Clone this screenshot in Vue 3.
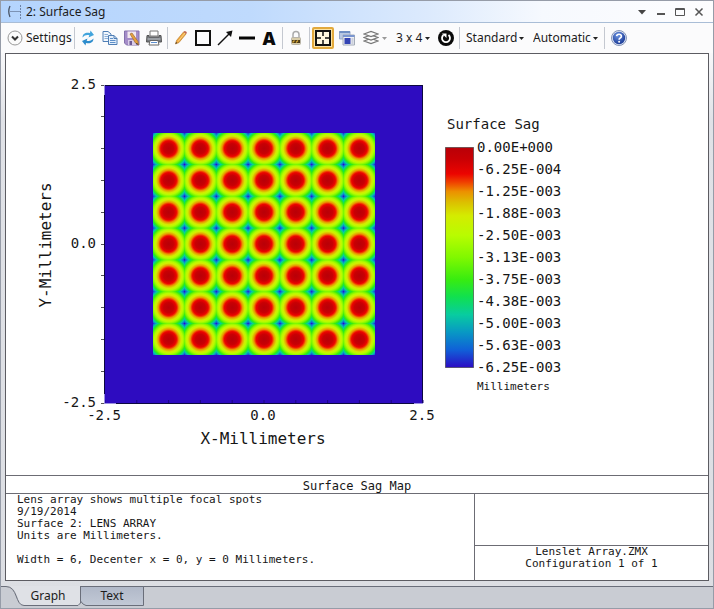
<script setup>
import { ref } from 'vue'

const activeTab = ref('Graph')

const palette = [
  [0, '#b80008'],
  [0.05, '#c80004'],
  [0.12, '#ec0400'],
  [0.16, '#f04400'],
  [0.2, '#ec9000'],
  [0.25, '#dcc000'],
  [0.31, '#d4ec00'],
  [0.4, '#b8fc00'],
  [0.5, '#80f800'],
  [0.6, '#38ec10'],
  [0.68, '#10e050'],
  [0.76, '#08cca0'],
  [0.84, '#0898c4'],
  [0.92, '#1060d8'],
  [1, '#2c0cc4']
]

// Sag grows with the square of the radius, so the radial stops sit at the square root.
const lensStops = palette.map(([t, color]) => ({ offset: Math.sqrt(t), color }))

const side = 318
const pitch = side / 10
const ticks = Array.from({ length: 11 }, (_, i) => i * pitch)
const lenses = Array.from({ length: 49 }, (_, i) => ({
  x: (1.5 + (i % 7)) * pitch,
  y: (1.5 + Math.floor(i / 7)) * pitch
}))

const levels = [
  '0.00E+000', '-6.25E-004', '-1.25E-003', '-1.88E-003', '-2.50E-003', '-3.13E-003',
  '-3.75E-003', '-4.38E-003', '-5.00E-003', '-5.63E-003', '-6.25E-003'
]
</script>

<template>
  <main class="window">
    <header class="titlebar">
      <svg class="app-icon" width="14" height="14" viewBox="0 0 14 14" fill="none">
        <path d="M3 1Q0.500 6.500 3 12" stroke="#4a5566" stroke-width="1.300" />
        <path d="M3 6.500H13" stroke="#7d93b5" />
        <path d="M13.500 0V14" stroke="#6e84a8" stroke-dasharray="2 1" />
      </svg>
      <h1>2: Surface Sag</h1>
      <div class="window-buttons">
        <button aria-label="Window menu"><svg width="10" height="10" viewBox="0 0 10 10"><path d="M1 3H9L5 7.500Z" fill="#444" /></svg></button>
        <button aria-label="Minimize"><svg width="10" height="10" viewBox="0 0 10 10"><path d="M1 6H9V8H1Z" fill="#555" /></svg></button>
        <button aria-label="Maximize"><svg width="10" height="10" viewBox="0 0 10 10" fill="none" stroke="#555"><path d="M1 1.500H9.500V8.500H0.500V1.500Z" /><path d="M0.500 2.500H9.500" /></svg></button>
        <button aria-label="Close"><svg width="10" height="10" viewBox="0 0 10 10" fill="none" stroke="#555" stroke-width="1.500"><path d="M1.500 1.500L8.500 8.500M8.500 1.500L1.500 8.500" /></svg></button>
      </div>
    </header>

    <div class="toolbar" role="toolbar" aria-label="Graph tools">
      <button class="settings">
        <svg width="16" height="16" viewBox="0 0 16 16" fill="none">
          <circle cx="8" cy="8" r="7" fill="#fbfbfb" stroke="#999" />
          <path d="M5 6.500L8 9.500L11 6.500" stroke="#333" stroke-width="2" />
        </svg>
        Settings
      </button>
      <span class="sep"></span>
      <button class="tool" aria-label="Update">
        <svg width="16" height="16" viewBox="0 0 16 16">
          <path d="M2.500 7.500C2.500 3.500 6 2 10 3L10.500 0.500L14 5L8.500 7.500L9.300 5.300C6.500 4.600 4.500 5.300 2.500 7.500Z" fill="#42a4dc" />
          <path d="M13.500 8.500C13.500 12.500 10 14 6 13L5.500 15.500L2 11L7.500 8.500L6.700 10.700C9.500 11.400 11.500 10.700 13.500 8.500Z" fill="#2d8ccc" />
        </svg>
      </button>
      <button class="tool" aria-label="Copy">
        <svg width="16" height="16" viewBox="0 0 16 16" stroke="#4f7eb5">
          <path d="M1 1.500H6L9 4V11.500H1Z" fill="#f2f7fd" />
          <path d="M2.500 4.500H6M2.500 6.500H6M2.500 8.500H6" stroke="#8fb0d8" />
          <path d="M6.500 5.500H12L15 8.500V14.500H6.500Z" fill="#e4effb" />
          <path d="M12 5.500V8.500H15" fill="none" />
          <path d="M8 8.500H11M8 10.500H13.500M8 12.500H13.500" stroke="#5e8fc8" />
        </svg>
      </button>
      <button class="tool" aria-label="Save">
        <svg width="16" height="16" viewBox="0 0 16 16">
          <path d="M0.500 1H15V15H2.500L0.500 13Z" fill="#a48cc8" stroke="#8470ac" />
          <path d="M3.500 1.500H12V8H3.500Z" fill="#f2e7ee" />
          <path d="M4 10H12V15H4Z" fill="#d8cce8" />
          <path d="M5.500 11H8V15H5.500Z" fill="#6d5a94" />
          <path d="M6 4L8 3L14 11.500L14.500 15L11.500 13Z" fill="#e5a03c" stroke="#a16b33" stroke-width="0.700" />
          <path d="M13 13L14.500 15L11.800 13.500Z" fill="#333" />
        </svg>
      </button>
      <button class="tool" aria-label="Print">
        <svg width="16" height="16" viewBox="0 0 16 16">
          <path d="M4 1H12V6H4Z" fill="#fff" stroke="#777" />
          <path d="M1 5.500H3V7H13V5.500H15L15.500 12H0.500Z" fill="#777b80" stroke="#555" />
          <path d="M1.500 9H14.500" stroke="#c0c4c8" />
          <path d="M4 10.500H12L13 15H3Z" fill="#fff" stroke="#666" />
          <path d="M5 12.500H11" stroke="#5c8fd0" />
        </svg>
      </button>
      <span class="sep"></span>
      <button class="tool" aria-label="Pencil">
        <svg width="16" height="16" viewBox="0 0 16 16">
          <path d="M2.500 14L3.500 10.500L10.500 2L13 4L6 12.500Z" fill="#efa840" stroke="#b47422" stroke-width="0.600" />
          <path d="M10.500 2L11.500 1Q13.500 1 14 3L13 4Z" fill="#c06850" />
          <path d="M2.500 14L3 12L4.200 13Z" fill="#333" />
          <path d="M5 11.500L12 3" stroke="#f8d488" />
        </svg>
      </button>
      <button class="tool" aria-label="Rectangle">
        <svg width="16" height="16" viewBox="0 0 16 16"><path d="M1 1H15V15H1Z" fill="none" stroke="#111" stroke-width="2" /></svg>
      </button>
      <button class="tool" aria-label="Arrow">
        <svg width="16" height="16" viewBox="0 0 16 16"><path d="M1 15L12 4" stroke="#111" stroke-width="1.500" /><path d="M15.500 0.500L14 7L9 2Z" fill="#111" /></svg>
      </button>
      <button class="tool" aria-label="Line">
        <svg width="16" height="16" viewBox="0 0 16 16"><path d="M0 6.500H16V9.500H0Z" fill="#050505" /></svg>
      </button>
      <button class="tool letter">A</button>
      <span class="sep"></span>
      <button class="tool" aria-label="Lock">
        <svg width="16" height="16" viewBox="0 0 16 16">
          <path d="M5 8V4.500Q5 1.500 8 1.500T11 4.500V8" fill="none" stroke="#aaa" stroke-width="1.500" />
          <rect x="3.500" y="7.500" width="9" height="7" rx="1" fill="#d8cca8" stroke="#b8b4a8" />
          <path d="M4 11.500H12" stroke="#4a3a18" stroke-width="3" />
          <path d="M4.500 12.500L6.500 10.500M8 12.500L10 10.500" stroke="#d8a838" stroke-width="1.200" />
        </svg>
      </button>
      <span class="sep"></span>
      <button class="tool pressed" aria-label="Fit to window" aria-pressed="true">
        <svg width="16" height="16" viewBox="0 0 16 16">
          <path d="M1 1H15V15H1Z" fill="#fff7df" stroke="#111" stroke-width="2" />
          <path d="M8 2V6M8 10V14M2 8H6M10 8H14" stroke="#111" stroke-width="1.500" />
        </svg>
      </button>
      <button class="tool clone" aria-label="Clone window">
        <svg width="16" height="16" viewBox="0 0 16 16">
          <path d="M0.500 1.500H11V9H0.500Z" fill="#b8c8e4" stroke="#9aaac8" />
          <path d="M0.500 2H11" stroke="#6f8fc4" stroke-width="2" />
          <path d="M4 5H15.500V15H4Z" fill="#eef0f6" stroke="#a4acb8" />
          <path d="M4 6H15.500" stroke="#7a96d0" stroke-width="2" />
          <path d="M5.500 8H11.500V14H5.500Z" fill="#3444b4" />
          <path d="M12.500 9H14.500M12.500 11H14.500M12.500 13H14.500" stroke="#a8b0c0" />
        </svg>
      </button>
      <button class="layers" aria-label="Layers">
        <svg width="16" height="16" viewBox="0 0 16 16" fill="#fdfdfd" stroke="#777" stroke-width="1.200">
          <path d="M1 11L8 8.500L15 11L8 13.500Z" />
          <path d="M1 7.500L8 5L15 7.500L8 10Z" />
          <path d="M1 4L8 1.500L15 4L8 6.500Z" />
        </svg>
        <svg class="caret muted" width="5" height="3" viewBox="0 0 5 3"><path d="M0 0H5L2.500 3Z" /></svg>
      </button>
      <label class="picker size">
        <select aria-label="Aspect ratio"><option>3 x 4</option></select>
        <svg class="caret" width="5" height="3" viewBox="0 0 5 3"><path d="M0 0H5L2.500 3Z" /></svg>
      </label>
      <button class="tool" aria-label="Reset view">
        <svg width="16" height="16" viewBox="0 0 16 16">
          <circle cx="8" cy="8" r="8" fill="#0a0a0a" />
          <path d="M10.500 5A4 4 0 1 1 5.500 5" fill="none" stroke="#fff" stroke-width="1.800" />
          <path d="M4 3.500H8.500V8Z" fill="#fff" />
        </svg>
      </button>
      <span class="sep"></span>
      <label class="picker standard">
        <select aria-label="Quality"><option>Standard</option></select>
        <svg class="caret" width="5" height="3" viewBox="0 0 5 3"><path d="M0 0H5L2.500 3Z" /></svg>
      </label>
      <label class="picker automatic">
        <select aria-label="Update mode"><option>Automatic</option></select>
        <svg class="caret" width="5" height="3" viewBox="0 0 5 3"><path d="M0 0H5L2.500 3Z" /></svg>
      </label>
      <span class="sep"></span>
      <button class="tool help" aria-label="Help">
        <svg width="16" height="16" viewBox="0 0 16 16">
          <defs>
            <radialGradient id="help-fill" cx="0.4" cy="0.3" r="0.7">
              <stop offset="0" stop-color="#6c93e0" /><stop offset="1" stop-color="#1c3c98" />
            </radialGradient>
          </defs>
          <circle cx="8" cy="8" r="7.500" fill="#dfe6f4" stroke="#8494b8" />
          <circle cx="8" cy="8" r="6.200" fill="url(#help-fill)" />
          <path d="M5.600 6.200Q5.800 4.200 8 4.200T10.400 6.200Q10.400 7.300 9.200 8Q8.100 8.600 8.100 9.700" fill="none" stroke="#fff" stroke-width="1.600" />
          <circle cx="8.100" cy="11.700" r="1" fill="#fff" />
        </svg>
      </button>
    </div>

    <section class="sheet">
      <div class="chart">
        <svg class="plot" width="430" height="400" viewBox="0 0 430 400" role="img" aria-label="Surface sag over X and Y in millimeters">
          <defs>
            <radialGradient id="lens" cx="0.5" cy="0.5" r="0.7071">
              <stop v-for="s in lensStops" :key="s.offset" :offset="s.offset" :stop-color="s.color" />
            </radialGradient>
          </defs>
          <g transform="translate(99 31)">
            <rect :width="side" :height="side" fill="#2e0cc0" />
            <g shape-rendering="crispEdges">
              <rect v-for="(l, i) in lenses" :key="i" :x="l.x" :y="l.y" :width="pitch" :height="pitch" fill="url(#lens)" />
            </g>
            <path d="M-1 0.500H318M-0.500 0V318M-1 318.500H318M317.500 0V318" fill="none" stroke="#0c0840" />
            <path v-for="t in ticks" :key="t" :d="`M-4 ${Math.floor(t) + 0.5}H-1`" stroke="#555" />
            <path v-for="t in ticks" :key="'x' + t" :d="`M${t} 315V318`" stroke="#1c0880" />
            <path d="M-1 318.500H11M309 318.500H318M-0.500 0V10M-0.500 309V318" stroke="#9c90e0" />
            <g class="tick-text">
              <text x="-9" y="4" text-anchor="end">2.5</text>
              <text x="-9" y="163" text-anchor="end">0.0</text>
              <text x="-9" y="322" text-anchor="end">-2.5</text>
              <text x="-1" y="335" text-anchor="middle">-2.5</text>
              <text x="158" y="335" text-anchor="middle">0.0</text>
              <text x="317" y="335" text-anchor="middle">2.5</text>
            </g>
            <text class="axis-text" x="158" y="359" text-anchor="middle">X-Millimeters</text>
            <text class="axis-text" transform="translate(-54 160) rotate(-90)" text-anchor="middle">Y-Millimeters</text>
          </g>
        </svg>

        <div class="legend">
          <h2>Surface Sag</h2>
          <div class="scale">
            <svg class="bar" viewBox="0 0 29 221" preserveAspectRatio="none">
              <defs>
                <linearGradient id="ramp" x2="0" y2="1">
                  <stop v-for="[t, color] in palette" :key="t" :offset="t" :stop-color="color" />
                </linearGradient>
              </defs>
              <rect x="0.500" y="0.500" width="28" height="220" fill="url(#ramp)" stroke="#333" stroke-opacity="0.6" />
            </svg>
            <ol class="levels">
              <li v-for="level in levels" :key="level">{{ level }}</li>
            </ol>
          </div>
          <p class="unit">Millimeters</p>
        </div>
      </div>

      <h2 class="caption">Surface Sag Map</h2>
      <div class="info">
        <div class="notes">
          <p>Lens array shows multiple focal spots</p>
          <p>9/19/2014</p>
          <p>Surface 2: LENS ARRAY</p>
          <p>Units are Millimeters.</p>
          <p class="spaced">Width = 6, Decenter x = 0, y = 0 Millimeters.</p>
        </div>
        <div class="file">
          <div class="blank"></div>
          <div class="config">
            <p>Lenslet Array.ZMX</p>
            <p>Configuration 1 of 1</p>
          </div>
        </div>
      </div>
    </section>

    <nav class="tabs" role="tablist">
      <button class="tab graph" role="tab" :aria-selected="activeTab === 'Graph'" @click="activeTab = 'Graph'">
        <svg width="80" height="20" viewBox="0 0 80 20">
          <path d="M0 0H80V16L77 19.500H23C15 19 18 0.500 5 0.500H0Z" fill="#dfe1e6" />
          <path d="M0 0H5C18 0.500 15 19 23 19.500V20H0Z" fill="#c9ccd3" />
          <path d="M0 0.500H5C17 0.500 14 19.500 23 19.500H77L79.500 17V0" fill="none" stroke="#6a6e7a" />
        </svg>
        <span>Graph</span>
      </button>
      <button class="tab text" role="tab" :aria-selected="activeTab === 'Text'" @click="activeTab = 'Text'">
        <svg width="64" height="20" viewBox="0 0 64 20">
          <defs>
            <linearGradient id="tab-fill" x2="0" y2="1">
              <stop offset="0" stop-color="#b0b8c8" /><stop offset="1" stop-color="#c2c9d6" />
            </linearGradient>
          </defs>
          <path d="M0.500 0.500H63.500V19.500H6Q3 19 0.500 15Z" fill="url(#tab-fill)" stroke="#6a6e7a" />
        </svg>
        <span>Text</span>
      </button>
    </nav>
  </main>
</template>

<style>
body {
  margin: 0;
  background: #fff;
}
</style>

<style scoped>
* {
  box-sizing: border-box;
}

h1, h2, p, ol {
  margin: 0;
  padding: 0;
  font-weight: 400;
}

button, select {
  margin: 0;
  padding: 0;
  border: 0;
  background: none;
  color: inherit;
  font: inherit;
}

svg {
  display: block;
  flex: none;
}

.window {
  display: flex;
  flex-direction: column;
  min-height: 100vh;
  border: 1px solid #969ca8;
  background: linear-gradient(#fcfcfd 40px, #e0e2e7 120px, #dcdee3);
  color: #1c1c1c;
  font: 12px/16px "Noto Sans", "Open Sans", sans-serif;
}

.titlebar {
  display: flex;
  align-items: center;
  height: 22px;
  padding: 0 9px 0 6px;
  border-bottom: 1px solid #a9bdd6;
  background: linear-gradient(90deg, #b4d4fd, #bfdafd 35%, #dceafd 60%, #f6f9fe 76%, #fdfdfe);
}

.titlebar h1 {
  flex: 1;
  padding-left: 5px;
  font-size: 12px;
}

.window-buttons {
  display: flex;
  gap: 9px;
}

.toolbar {
  display: flex;
  align-items: center;
  height: 30px;
  padding-left: 6px;
  background: #fbfbfc;
}

.settings {
  display: flex;
  align-items: center;
  gap: 3px;
  width: 65px;
  white-space: nowrap;
}

.sep {
  flex: none;
  width: 1px;
  height: 22px;
  margin: 0 2px;
  background: #c4c8d0;
}

.tool {
  display: flex;
  flex: none;
  align-items: center;
  justify-content: center;
  width: 22px;
  height: 22px;
}

.letter {
  color: #0a0a0a;
  font: 800 18px/20px "Open Sans", sans-serif;
}

.pressed {
  border: 2px solid #e2a93c;
  border-radius: 2px;
  background: #fbe3a4;
}

.clone {
  width: 26px;
}

.layers {
  display: flex;
  align-items: center;
  gap: 3px;
  width: 34px;
  padding-left: 3px;
}

.caret {
  fill: #222;
  pointer-events: none;
}

.muted {
  fill: #999;
}

.picker {
  display: flex;
  align-items: center;
  justify-content: space-between;
}

.picker select {
  appearance: none;
  outline: 0;
}

.size {
  width: 34px;
  margin: 0 5px 0 2px;
}

.standard {
  width: 58px;
  margin: 0 9px 0 4px;
}

.automatic {
  width: 65px;
  margin-right: 4px;
}

.help {
  margin-left: 1px;
}

.sheet {
  display: flex;
  flex: 1;
  flex-direction: column;
  margin: 0 4px 5px;
  border: 1px solid #5c5c62;
  background: #fff;
  color: #161616;
  font-family: "DejaVu Sans Mono", monospace;
}

.chart {
  display: flex;
  flex: 1;
  align-items: flex-start;
  gap: 9px;
}

.tick-text {
  font-size: 14px;
}

.axis-text {
  font-size: 16px;
}

.plot text {
  fill: #161616;
}

.legend {
  padding-top: 59px;
  font-size: 14px;
  line-height: 22px;
}

.legend h2 {
  padding-left: 2px;
  font-size: 14px;
}

.scale {
  display: flex;
  gap: 3px;
}

.bar {
  width: 29px;
  height: 221px;
  margin-top: 12px;
}

.levels {
  padding-top: 1px;
  list-style: none;
}

.unit {
  padding-left: 32px;
  font-size: 11px;
  line-height: 18px;
}

.caption {
  height: 18px;
  border-top: 1px solid #6c6c74;
  font-size: 12px;
  line-height: 20px;
  text-align: center;
}

.info {
  display: grid;
  grid-template-columns: 2fr 1fr;
  height: 87px;
  border-top: 1px solid #6c6c74;
  font-size: 11px;
  line-height: 12px;
}

.notes {
  padding-left: 11px;
}

.spaced {
  margin-top: 12px;
}

.file {
  display: flex;
  flex-direction: column;
  border-left: 1px solid #6c6c74;
  text-align: center;
}

.blank {
  flex: 1;
}

.config {
  height: 35px;
  border-top: 1px solid #6c6c74;
}

.tabs {
  display: flex;
  align-items: flex-start;
  height: 22px;
  background: linear-gradient(#6a6e7a 1px, #c9ccd3 1px);
}

.tab {
  position: relative;
  height: 20px;
}

.tab svg {
  position: absolute;
  inset: 0;
}

.tab span {
  position: relative;
}

.graph {
  width: 80px;
  padding-left: 14px;
}

.text {
  width: 64px;
  margin-left: -1px;
}
</style>
